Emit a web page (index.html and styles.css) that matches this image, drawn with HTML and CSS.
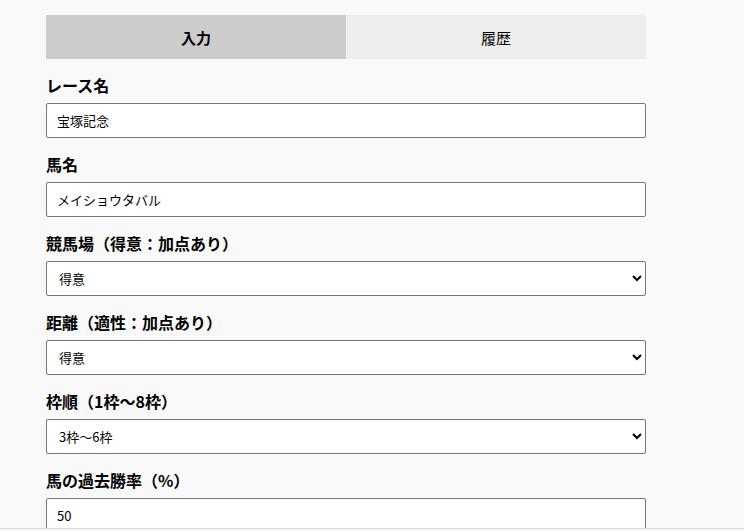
FILE: index.html
```html
<!DOCTYPE html>
<html lang="ja">
<head>
<meta charset="utf-8">
<title>予想入力</title>
<link rel="stylesheet" href="styles.css">
</head>
<body>
<div class="app">
  <div class="tabs">
    <button class="tab tab-active">入力</button>
    <button class="tab">履歴</button>
  </div>
  <form class="form">
    <div class="group">
      <label class="label">レース名</label>
      <input class="field" type="text" value="宝塚記念">
    </div>
    <div class="group">
      <label class="label">馬名</label>
      <input class="field" type="text" value="メイショウタバル">
    </div>
    <div class="group">
      <label class="label">競馬場（得意：加点あり）</label>
      <select class="field select">
        <option selected>得意</option>
        <option>普通</option>
        <option>苦手</option>
      </select>
    </div>
    <div class="group">
      <label class="label">距離（適性：加点あり）</label>
      <select class="field select">
        <option selected>得意</option>
        <option>普通</option>
        <option>苦手</option>
      </select>
    </div>
    <div class="group">
      <label class="label">枠順（1枠～8枠）</label>
      <select class="field select">
        <option>1枠～2枠</option>
        <option selected>3枠～6枠</option>
        <option>7枠～8枠</option>
      </select>
    </div>
    <div class="group">
      <label class="label">馬の過去勝率（%）</label>
      <input class="field" type="text" value="50">
    </div>
  </form>
</div>
<div class="bottom-bar"></div>
</body>
</html>
```
FILE: styles.css
```css
html, body {
  margin: 0;
  padding: 0;
  background: #f9f9f9;
  font-family: "Noto Sans CJK JP", "Noto Sans", sans-serif;
  color: #000;
}
.app {
  width: 600px;
  padding: 15px 0 0 46px;
}
.tabs {
  display: flex;
  height: 44px;
}
.tab {
  flex: 1;
  border: none;
  margin: 0;
  padding: 0;
  background: #eeeeee;
  font-family: inherit;
  font-size: 15px;
  font-weight: normal;
  color: #000;
}
.tab-active {
  background: #cccccc;
  font-weight: bold;
}
.form {
  display: flex;
  flex-direction: column;
  gap: 14px;
  padding-top: 14px;
}
.group {
  display: flex;
  flex-direction: column;
}
.label {
  font-size: 16px;
  font-weight: bold;
  line-height: 24px;
  margin-bottom: 6px;
}
.field {
  box-sizing: border-box;
  width: 600px;
  height: 35px;
  margin: 0;
  border: 1px solid #767676;
  border-radius: 2px;
  background: #fff;
  padding: 0 10px;
  font-family: inherit;
  font-size: 13px;
  color: #000;
}
.select {
  padding: 0 8px;
}
.bottom-bar {
  position: fixed;
  left: 0;
  right: 0;
  bottom: 0;
  height: 2px;
  border-top: 1px solid #dddddd;
  background: #f4f4f4;
}
```
